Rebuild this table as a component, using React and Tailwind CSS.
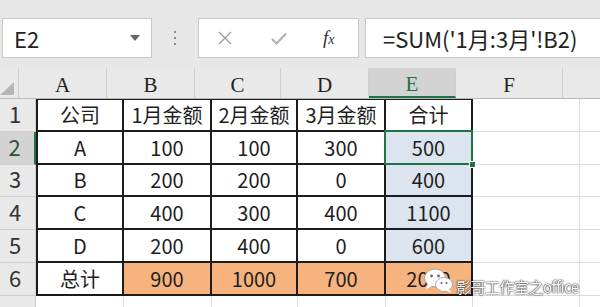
import React from "react";

const COLS = ["A", "B", "C", "D", "E", "F", "G"];
const W = ["w-[88px]", "w-[88px]", "w-[86px]", "w-[88px]", "w-[87px]", "w-[107px]", "w-[40px]"];

const ROWS = [
  { n: "1", h: "h-[33px]", cells: ["公司", "1月金额", "2月金额", "3月金额", "合计"] },
  { n: "2", h: "h-[33px]", cells: ["A", "100", "100", "300", "500"] },
  { n: "3", h: "h-[32px]", cells: ["B", "200", "200", "0", "400"] },
  { n: "4", h: "h-[33px]", cells: ["C", "400", "300", "400", "1100"] },
  { n: "5", h: "h-[33px]", cells: ["D", "200", "400", "0", "600"] },
  { n: "6", h: "h-[33px]", cells: ["总计", "900", "1000", "700", "2000"] },
  { n: "", h: "h-[33px]", cells: [] },
];

function Toolbar() {
  return (
    <div className="flex h-[68px] items-start bg-[#e7e7e7] pt-[18px]">
      <div className="ml-[2px] flex h-[40px] w-[150px] items-center justify-between border border-[#c8c8c8] bg-white pl-[11px] pr-[11px]">
        <span className="text-[22px] text-[#222]">E2</span>
        <svg width="10" height="6" viewBox="0 0 10 6">
          <path d="M0 0h10L5 6z" fill="#666" />
        </svg>
      </div>
      <div className="flex h-[40px] w-[46px] flex-col items-center justify-center gap-[4px]">
        <span className="h-[2px] w-[2px] bg-[#888]" />
        <span className="h-[2px] w-[2px] bg-[#888]" />
        <span className="h-[2px] w-[2px] bg-[#888]" />
      </div>
      <div className="flex h-[40px] w-[161px] items-center border border-[#c8c8c8] bg-white">
        <svg className="ml-[19px]" width="14" height="14" viewBox="0 0 14 14">
          <path d="M1 1l12 12M13 1L1 13" stroke="#9a9a9a" strokeWidth="1.3" />
        </svg>
        <svg className="ml-[39px]" width="16" height="13" viewBox="0 0 16 13">
          <path d="M1 7l4.5 4.5L15 1.5" stroke="#b3b3b3" strokeWidth="2.2" fill="none" />
        </svg>
        <span className="ml-[36px] font-['Liberation_Serif',serif] text-[19px] italic text-[#333]">
          f<span className="text-[14px]">x</span>
        </span>
      </div>
      <div className="ml-[6px] flex h-[40px] flex-1 items-center border border-r-0 border-[#c8c8c8] bg-white pl-[17px]">
        <span className="text-[22px] text-[#222]">=SUM('1月:3月'!B2)</span>
      </div>
    </div>
  );
}

function HeaderRow() {
  return (
    <div className="flex h-[31px] border-b border-[#b9b9b9] bg-[#e9e9e9]">
      <div className="flex w-[36px] items-end justify-end border-r border-[#cfcfcf] pb-[3px] pr-[4px]">
        <svg width="14" height="13" viewBox="0 0 14 13">
          <path d="M14 0v13H0z" fill="#b5b5b5" />
        </svg>
      </div>
      {COLS.map((c, i) => (
        <div
          key={c}
          className={`${W[i]} flex shrink-0 items-center justify-center border-r border-[#cfcfcf] pt-[6px] font-['Liberation_Serif',serif] text-[21px] ${
            c === "E" ? "border-b-2 border-b-[#217346] bg-[#d3d3d3] text-[#217346]" : "text-[#222]"
          }`}
        >
          {c === "G" ? "" : c}
        </div>
      ))}
    </div>
  );
}

function BodyRow({ row, r }) {
  const inTable = r < 6;
  return (
    <div className={`flex ${row.h}`}>
      <div
        className={`flex w-[36px] shrink-0 items-end justify-center pb-[1px] pr-[5px] text-[22px] ${
          r === 1 ? "border-r-2 border-r-[#217346] bg-[#d3d3d3] text-[#2f4f3a]" : "border-r border-r-[#cfcfcf] bg-[#e9e9e9] text-[#333]"
        } border-b border-b-[#cfcfcf]`}
      >
        {row.n}
      </div>
      {COLS.map((c, i) => {
        const table = inTable && i < 5;
        let cls = `${W[i]} relative flex shrink-0 items-center justify-center text-[20px] text-[#1e1e1e]`;
        if (table) {
          cls += " border-r-2 border-b-2 border-[#1c1c1c]";
          if (i === 0) cls += " border-l-2";
          if (r === 0) cls += " border-t";
          if (r === 5 && i > 0) cls += " bg-[#f7b37e]";
          else if (i === 4 && r >= 1) cls += " bg-[#dce4ef]";
          else cls += " bg-white";
        } else {
          cls += " border-r border-b border-[#dcdcdc] bg-white";
        }
        return (
          <div key={c} className={cls}>
            {table ? row.cells[i] : ""}
            {r === 1 && i === 4 && (
              <>
                <div className="absolute -inset-[2px] z-10 border-2 border-[#217346]" />
                <div className="absolute -bottom-[5px] -right-[5px] z-20 h-[7px] w-[7px] border border-white bg-[#217346]" />
              </>
            )}
          </div>
        );
      })}
    </div>
  );
}

function Watermark() {
  return (
    <div className="absolute left-[423px] top-[268px] z-30 flex items-center">
      <svg width="32" height="26" viewBox="0 0 32 26">
        <ellipse cx="12" cy="10" rx="10.5" ry="9" fill="#fff" stroke="#9a9a9a" strokeWidth="0.8" />
        <path d="M5 16l-2 5 6-3z" fill="#fff" />
        <circle cx="8.5" cy="8" r="1.4" fill="#6b6b6b" />
        <circle cx="15.5" cy="8" r="1.4" fill="#6b6b6b" />
        <ellipse cx="21" cy="16.5" rx="8.5" ry="7" fill="#fff" stroke="#9a9a9a" strokeWidth="0.8" />
        <path d="M26 21l2 4-5-2.5z" fill="#fff" />
        <circle cx="18.5" cy="15" r="1.1" fill="#6b6b6b" />
        <circle cx="23.5" cy="15" r="1.1" fill="#6b6b6b" />
      </svg>
      <span className="ml-[1px] mt-[10px] text-[15px] leading-none tracking-[-0.5px] text-white [text-shadow:0_0_2px_rgba(0,0,0,0.85),0_0_1px_rgba(0,0,0,0.9)]">
        影哥工作室之office
      </span>
    </div>
  );
}

export default function App() {
  return (
    <div className="relative h-[307px] w-[600px] overflow-hidden bg-white font-['Noto_Sans_CJK_SC','Noto_Sans',sans-serif]">
      <Toolbar />
      <HeaderRow />
      {ROWS.map((row, r) => (
        <BodyRow key={r} row={row} r={r} />
      ))}
      <Watermark />
    </div>
  );
}
